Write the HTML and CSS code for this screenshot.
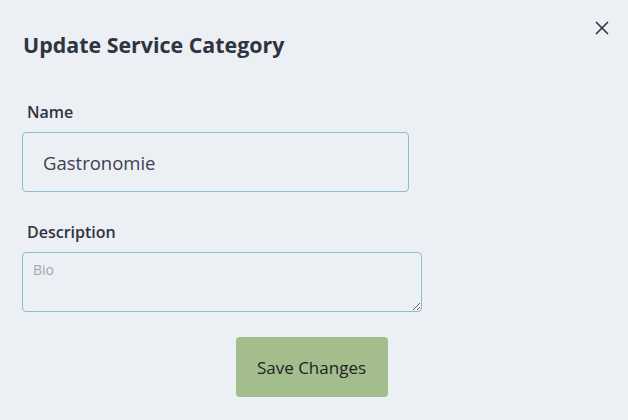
FILE: index.html
```html
<!DOCTYPE html>
<html lang="en">
<head>
<meta charset="utf-8">
<title>Update Service Category</title>
<link rel="stylesheet" href="styles.css">
</head>
<body>
<div class="modal">
  <button class="close" aria-label="Close">
    <svg width="14" height="14" viewBox="0 0 14 14"><path d="M1 1L13 13M13 1L1 13" stroke="#2e3440" stroke-width="1.6" fill="none"/></svg>
  </button>
  <h2 class="title">Update Service Category</h2>
  <form class="form">
    <div class="field">
      <label class="label">Name</label>
      <input class="input" type="text" value="Gastronomie">
    </div>
    <div class="field">
      <label class="label">Description</label>
      <textarea class="textarea" placeholder="Bio"></textarea>
    </div>
    <div class="actions">
      <button type="button" class="save">Save Changes</button>
    </div>
  </form>
</div>
</body>
</html>
```
FILE: styles.css
```css
html, body {
  margin: 0;
  padding: 0;
  background: #eceff4;
}
body {
  font-family: "Open Sans", "Noto Sans", sans-serif;
  color: #2e3440;
}
.modal {
  position: relative;
  width: 628px;
  height: 420px;
  box-sizing: border-box;
  padding: 30px 22px 0 22px;
}
.close {
  position: absolute;
  top: 20px;
  right: 18px;
  background: none;
  border: none;
  padding: 0;
  width: 16px;
  height: 16px;
  display: flex;
  align-items: center;
  justify-content: center;
}
.title {
  margin: 0 0 0 1px;
  font-size: 21.4px;
  font-weight: 700;
  line-height: 30px;
}
.form {
  display: flex;
  flex-direction: column;
  margin-top: 40px;
}
.field {
  display: flex;
  flex-direction: column;
}
.field + .field {
  margin-top: 28px;
}
.label {
  margin-left: 5px;
  font-size: 16px;
  font-weight: 600;
  line-height: 24px;
  margin-bottom: 8px;
}
.input {
  width: 387px;
  height: 60px;
  box-sizing: border-box;
  border: 1px solid #88c0d0;
  border-radius: 4px;
  background: #eceff4;
  padding: 0 20px;
  font-family: inherit;
  font-size: 18.5px;
  color: #3b4252;
  outline: none;
}
.textarea {
  width: 400px;
  height: 60px;
  box-sizing: border-box;
  border: 1px solid #88c0d0;
  border-radius: 4px;
  background: #eceff4;
  padding: 7px 10px;
  font-family: inherit;
  font-size: 14px;
  color: #3b4252;
  outline: none;
}
.textarea::placeholder {
  color: #a0a6b1;
}
.actions {
  display: flex;
  justify-content: center;
  margin-top: 25px;
  padding-right: 5px;
}
.save {
  width: 152px;
  height: 60px;
  border: none;
  border-radius: 4px;
  background: #a3be8c;
  color: #1e2126;
  font-family: inherit;
  font-size: 17px;
}
```
